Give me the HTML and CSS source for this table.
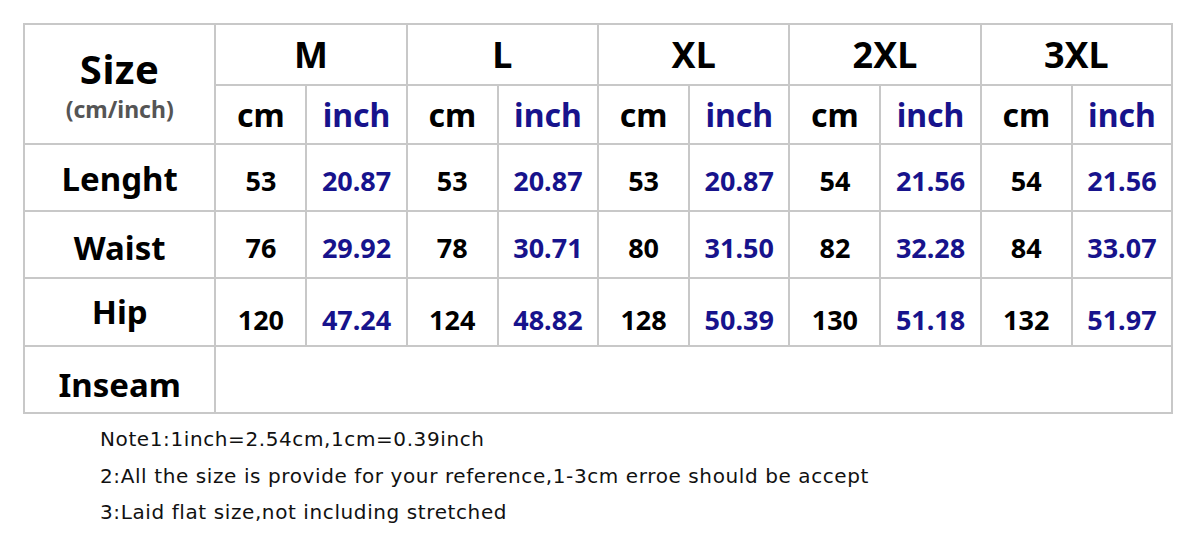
FILE: index.html
```html
<!DOCTYPE html>
<html>
<head>
<meta charset="utf-8">
<link rel="stylesheet" href="styles.css">
</head>
<body>
<div class="page">
  <table class="chart">
    <colgroup>
      <col class="c-label">
      <col class="c-cm"><col class="c-in">
      <col class="c-cm"><col class="c-in">
      <col class="c-cm"><col class="c-in">
      <col class="c-cm"><col class="c-in">
      <col class="c-cm"><col class="c-in">
    </colgroup>
    <tr class="r-size">
      <th rowspan="2" class="size-cell"><div class="size-title">Size</div><div class="size-unit">(cm/inch)</div></th>
      <th colspan="2" class="size-name">M</th>
      <th colspan="2" class="size-name">L</th>
      <th colspan="2" class="size-name">XL</th>
      <th colspan="2" class="size-name">2XL</th>
      <th colspan="2" class="size-name">3XL</th>
    </tr>
    <tr class="r-unit">
      <th class="unit">cm</th><th class="unit inch">inch</th>
      <th class="unit">cm</th><th class="unit inch">inch</th>
      <th class="unit">cm</th><th class="unit inch">inch</th>
      <th class="unit">cm</th><th class="unit inch">inch</th>
      <th class="unit">cm</th><th class="unit inch">inch</th>
    </tr>
    <tr class="r-data r-len">
      <th class="label">Lenght</th>
      <td>53</td><td class="inch">20.87</td>
      <td>53</td><td class="inch">20.87</td>
      <td>53</td><td class="inch">20.87</td>
      <td>54</td><td class="inch">21.56</td>
      <td>54</td><td class="inch">21.56</td>
    </tr>
    <tr class="r-data r-waist">
      <th class="label">Waist</th>
      <td>76</td><td class="inch">29.92</td>
      <td>78</td><td class="inch">30.71</td>
      <td>80</td><td class="inch">31.50</td>
      <td>82</td><td class="inch">32.28</td>
      <td>84</td><td class="inch">33.07</td>
    </tr>
    <tr class="r-data r-hip">
      <th class="label">Hip</th>
      <td>120</td><td class="inch">47.24</td>
      <td>124</td><td class="inch">48.82</td>
      <td>128</td><td class="inch">50.39</td>
      <td>130</td><td class="inch">51.18</td>
      <td>132</td><td class="inch">51.97</td>
    </tr>
    <tr class="r-data r-inseam">
      <th class="label">Inseam</th>
      <td colspan="10"></td>
    </tr>
  </table>
  <div class="notes">
    <p>Note1:1inch=2.54cm,1cm=0.39inch</p>
    <p>2:All the size is provide for your reference,1-3cm erroe should be accept</p>
    <p>3:Laid flat size,not including stretched</p>
  </div>
</div>
</body>
</html>
```

FILE: styles.css
```css
html, body {
  margin: 0;
  padding: 0;
  background: #ffffff;
}

.page {
  padding: 23px 0 0 23px;
  font-family: "Noto Sans", "DejaVu Sans", sans-serif;
  color: #000;
}

.chart {
  border-collapse: collapse;
  table-layout: fixed;
  width: 1150px;
  border: 2px solid #c8c8c8;
}

.c-label { width: 191px; }
.c-cm { width: 91px; }
.c-in { width: 100px; }

.chart th,
.chart td {
  border: 2px solid #c8c8c8;
  padding: 0;
  text-align: center;
  vertical-align: middle;
  font-weight: 700;
}

.r-size { height: 61px; }
.r-unit { height: 59px; }
.r-len { height: 67px; }
.r-waist { height: 67px; }
.r-hip { height: 68px; }
.r-inseam { height: 67px; }

.size-cell {
  vertical-align: top;
}

.size-title {
  font-size: 40px;
  line-height: 44px;
  margin-top: 2px;
  letter-spacing: 0.5px;
}

.size-unit {
  font-size: 23px;
  line-height: 28px;
  color: #555555;
  font-weight: 700;
  margin-top: 4px;
}

.size-name {
  font-size: 36px;
  line-height: 40px;
  padding-top: 10px;
}

.unit {
  font-size: 32px;
  line-height: 36px;
  padding-top: 4px;
}

.inch {
  color: #17138c;
}

.chart td {
  font-size: 27px;
  line-height: 32px;
  padding-top: 6px;
}

.r-hip td {
  padding-top: 16px;
}

.label {
  font-size: 33px;
  line-height: 40px;
  padding-left: 4px;
}

.r-len .label { padding-top: 2px; }
.r-waist .label { padding-top: 6px; }
.r-hip .label { padding-top: 0; padding-bottom: 0; }
.r-inseam .label { padding-top: 10px; }

.notes {
  margin: 7px 0 0 77px;
  font-family: "DejaVu Sans", sans-serif;
  font-size: 20px;
  line-height: 36.5px;
  letter-spacing: 0.6px;
  color: #111;
}

.notes p {
  margin: 0;
}
```
